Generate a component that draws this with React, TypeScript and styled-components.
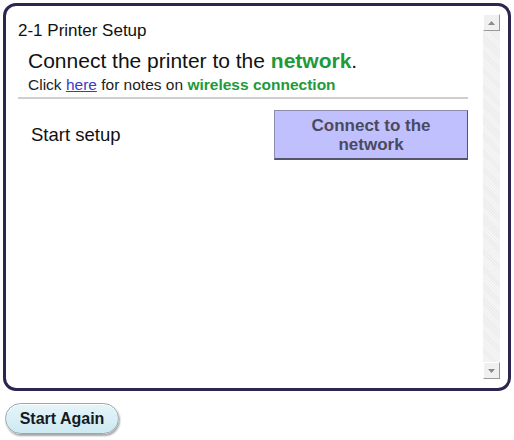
import React from 'react'
import styled, { createGlobalStyle } from 'styled-components'

const Global = createGlobalStyle`
  html, body {
    margin: 0;
    padding: 0;
    background: #fff;
    font-family: "Liberation Sans", Arial, sans-serif;
  }
`

const Page = styled.div`
  width: 514px;
  height: 440px;
  padding: 3px 3px 0 3px;
  box-sizing: border-box;
  display: flex;
  flex-direction: column;
  gap: 12px;
`

const Frame = styled.div`
  height: 388px;
  box-sizing: border-box;
  border: 3px solid #2b2550;
  border-radius: 13px;
  display: flex;
  padding: 8px 8px 9px 10px;
`

const Content = styled.div`
  flex: 1;
  padding: 8px 15px 0 2px;
  display: flex;
  flex-direction: column;
`

const Title = styled.div`
  font-size: 17px;
  color: #111;
  line-height: 18px;
`

const Heading = styled.div`
  margin-top: 8px;
  padding-left: 10px;
  font-size: 21px;
  line-height: 25px;
  color: #111;
`

const Green = styled.span`
  color: #1e9a3a;
  font-weight: bold;
`

const Note = styled.div`
  margin-top: 3px;
  padding-left: 10px;
  font-size: 15.5px;
  line-height: 18px;
  color: #222;
`

const Link = styled.a`
  color: #3b3bc8;
  text-decoration: underline;
`

const Divider = styled.hr`
  margin: 3px 0 0 0;
  border: none;
  border-top: 2px solid #cfcfcf;
`

const Row = styled.div`
  margin-top: 11px;
  display: flex;
  align-items: center;
  justify-content: space-between;
`

const Label = styled.div`
  padding-left: 13px;
  font-size: 18.5px;
  color: #111;
`

const ActionButton = styled.button`
  width: 194px;
  height: 50px;
  background: #c0c0fe;
  border: 1px solid #8c8cb0;
  border-right-color: #55556a;
  border-bottom: 2px solid #55556a;
  font-family: "Liberation Sans", Arial, sans-serif;
  font-size: 17px;
  font-weight: bold;
  color: #4a4a5e;
  line-height: 19px;
  padding: 0;
`

const Scrollbar = styled.div`
  width: 17px;
  display: flex;
  flex-direction: column;
  background: repeating-linear-gradient(45deg, #f6f6f6 0 1px, #ececec 1px 2px);
`

const Track = styled.div`
  flex: 1;
`

const Arrow = styled.div`
  width: 17px;
  height: 17px;
  box-sizing: border-box;
  background: #f0f0f0;
  border: 1px solid #fff;
  border-right-color: #9a9a9a;
  border-bottom-color: #9a9a9a;
  display: flex;
  align-items: center;
  justify-content: center;
`

const AgainButton = styled.button`
  width: 114px;
  height: 31px;
  margin-left: 2px;
  border-radius: 16px;
  border: 1px solid #9aa9b0;
  background: linear-gradient(#e6f5fa, #cde9f2);
  box-shadow: 1px 2px 2px rgba(0, 0, 0, 0.35), inset 0 1px 0 #fff;
  font-family: "Liberation Sans", Arial, sans-serif;
  font-size: 16px;
  font-weight: bold;
  color: #151a22;
  padding: 0;
`

const Tri = ({ up }: { up: boolean }) => (
  <svg width="7" height="4" viewBox="0 0 7 4">
    <path d={up ? 'M0 4 L3.5 0 L7 4 Z' : 'M0 0 L3.5 4 L7 0 Z'} fill="#8a8a8a" />
  </svg>
)

export default function App() {
  return (
    <Page>
      <Global />
      <Frame>
        <Content>
          <Title>2-1 Printer Setup</Title>
          <Heading>
            Connect the printer to the <Green>network</Green>.
          </Heading>
          <Note>
            Click <Link href="#">here</Link> for notes on <Green>wireless connection</Green>
          </Note>
          <Divider />
          <Row>
            <Label>Start setup</Label>
            <ActionButton>
              Connect to the
              <br />
              network
            </ActionButton>
          </Row>
        </Content>
        <Scrollbar>
          <Arrow>
            <Tri up />
          </Arrow>
          <Track />
          <Arrow>
            <Tri up={false} />
          </Arrow>
        </Scrollbar>
      </Frame>
      <AgainButton>Start Again</AgainButton>
    </Page>
  )
}
